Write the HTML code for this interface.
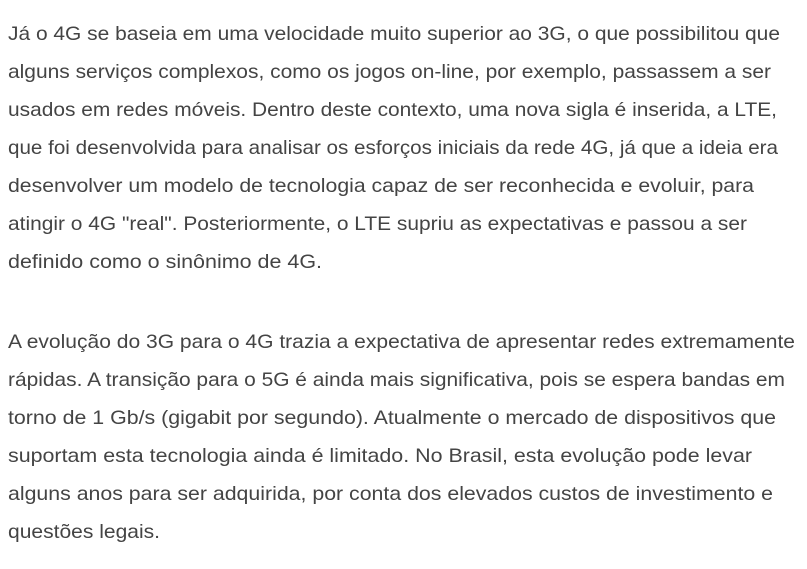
<!DOCTYPE html>
<html><head><meta charset="utf-8"><style>
html,body{margin:0;padding:0;background:#fff;width:807px;height:569px;overflow:hidden}
svg text{font-family:"Liberation Sans",sans-serif;font-size:19.5px;fill:#444}
</style></head><body>
<svg width="807" height="569" xmlns="http://www.w3.org/2000/svg">
<text x="8" y="40" textLength="772" lengthAdjust="spacingAndGlyphs">Já o 4G se baseia em uma velocidade muito superior ao 3G, o que possibilitou que</text>
<text x="8" y="78" textLength="763" lengthAdjust="spacingAndGlyphs">alguns serviços complexos, como os jogos on-line, por exemplo, passassem a ser</text>
<text x="8" y="116" textLength="769" lengthAdjust="spacingAndGlyphs">usados em redes móveis. Dentro deste contexto, uma nova sigla é inserida, a LTE,</text>
<text x="8" y="154" textLength="770" lengthAdjust="spacingAndGlyphs">que foi desenvolvida para analisar os esforços iniciais da rede 4G, já que a ideia era</text>
<text x="8" y="192" textLength="746" lengthAdjust="spacingAndGlyphs">desenvolver um modelo de tecnologia capaz de ser reconhecida e evoluir, para</text>
<text x="8" y="230" textLength="739" lengthAdjust="spacingAndGlyphs">atingir o 4G "real". Posteriormente, o LTE supriu as expectativas e passou a ser</text>
<text x="8" y="268" textLength="314" lengthAdjust="spacingAndGlyphs">definido como o sinônimo de 4G.</text>
<text x="8" y="348" textLength="787" lengthAdjust="spacingAndGlyphs">A evolução do 3G para o 4G trazia a expectativa de apresentar redes extremamente</text>
<text x="8" y="386" textLength="777" lengthAdjust="spacingAndGlyphs">rápidas. A transição para o 5G é ainda mais significativa, pois se espera bandas em</text>
<text x="8" y="424" textLength="768" lengthAdjust="spacingAndGlyphs">torno de 1 Gb/s (gigabit por segundo). Atualmente o mercado de dispositivos que</text>
<text x="8" y="462" textLength="744" lengthAdjust="spacingAndGlyphs">suportam esta tecnologia ainda é limitado. No Brasil, esta evolução pode levar</text>
<text x="8" y="500" textLength="765" lengthAdjust="spacingAndGlyphs">alguns anos para ser adquirida, por conta dos elevados custos de investimento e</text>
<text x="8" y="538" textLength="152" lengthAdjust="spacingAndGlyphs">questões legais.</text>
</svg>
</body></html>
